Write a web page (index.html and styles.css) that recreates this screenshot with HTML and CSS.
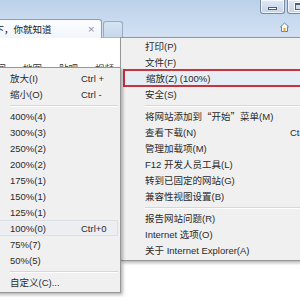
FILE: index.html
```html
<!DOCTYPE html>
<html lang="zh-CN">
<head>
  <meta charset="UTF-8">
  <title>Internet Explorer - 缩放</title>
  <link rel="stylesheet" href="styles.css">
</head>
<body>
  <div class="window">
    <div class="chrome">
      <div class="caption">
        <div class="win-btns">
          <span class="wbtn wbtn-min"><i></i></span>
          <span class="wbtn wbtn-max"><i></i></span>
        </div>
      </div>
      <div class="tabbar">
        <div class="tab">
          <span class="tab-title">百度一下，你就知道</span>
          <span class="tab-close">×</span>
        </div>
        <div class="tab-new"></div>
        <div class="toolbar-icons">
          <svg width="9" height="10" viewBox="0 0 9 10">
            <path d="M0.5 4.8 L4.5 1 L8.5 4.8 L7.5 4.8 L7.5 9.5 L1.5 9.5 L1.5 4.8 Z" fill="#fbfbfb" stroke="#6d7f96" stroke-width="1"/>
            <rect x="3.5" y="6" width="2" height="3.5" fill="#e3a23a"/>
          </svg>
        </div>
      </div>
    </div>

    <div class="page">
      <div class="page-nav">
        <span>新闻</span><span>地图</span><span>贴吧</span><span>视频</span>
      </div>
    </div>

    <!-- tools menu -->
    <div class="menu tools-menu">
      <div class="item"><span>打印(P)</span></div>
      <div class="item"><span>文件(F)</span></div>
      <div class="item item-marked"><span>缩放(Z) (100%)</span></div>
      <div class="item"><span>安全(S)</span></div>
      <div class="sep"></div>
      <div class="item"><span>将网站添加到<b class="cjk">“</b>开始<b class="cjk">”</b>菜单(M)</span></div>
      <div class="item"><span>查看下载(N)</span><span class="key">Ctrl+J</span></div>
      <div class="item"><span>管理加载项(M)</span></div>
      <div class="item"><span>F12 开发人员工具(L)</span></div>
      <div class="item"><span>转到已固定的网站(G)</span></div>
      <div class="item"><span>兼容性视图设置(B)</span></div>
      <div class="sep"></div>
      <div class="item"><span>报告网站问题(R)</span></div>
      <div class="item"><span>Internet 选项(O)</span></div>
      <div class="item"><span>关于 Internet Explorer(A)</span></div>
    </div>

    <!-- zoom submenu -->
    <div class="menu zoom-menu">
      <div class="item"><span>放大(I)</span><span class="key">Ctrl +</span></div>
      <div class="item"><span>缩小(O)</span><span class="key">Ctrl -</span></div>
      <div class="sep"></div>
      <div class="item"><span>400%(4)</span></div>
      <div class="item"><span>300%(3)</span></div>
      <div class="item"><span>250%(2)</span></div>
      <div class="item"><span>200%(2)</span></div>
      <div class="item"><span>175%(1)</span></div>
      <div class="item"><span>150%(1)</span></div>
      <div class="item"><span>125%(1)</span></div>
      <div class="item item-current"><span>100%(0)</span><span class="key">Ctrl+0</span></div>
      <div class="item"><span>75%(7)</span></div>
      <div class="item"><span>50%(5)</span></div>
      <div class="sep"></div>
      <div class="item"><span>自定义(C)...</span></div>
    </div>
  </div>
</body>
</html>
```

FILE: styles.css
```css
:root {
  --menu-bg: #f0f0f0;
  --menu-border: #979797;
  --text: #2a2a2a;
  --glass-top: #bcd1ea;
  --glass-bottom: #d3e2f3;
}

* {
  margin: 0;
  padding: 0;
  box-sizing: border-box;
}

body {
  width: 300px;
  height: 300px;
  overflow: hidden;
  background: #ffffff;
  font-family: "Liberation Sans", "Noto Sans CJK SC", sans-serif;
  font-size: 9.5px;
  color: var(--text);
}

.window {
  position: relative;
  width: 300px;
  height: 300px;
  overflow: hidden;
}

/* window chrome */
.chrome {
  background: linear-gradient(to bottom, var(--glass-top), var(--glass-bottom));
}

.caption {
  height: 17px;
  display: flex;
  justify-content: flex-end;
}

.win-btns {
  display: flex;
  gap: 2px;
  margin-right: -12px;
}

.wbtn {
  width: 25px;
  height: 14px;
  border: 1px solid #7a8ba1;
  border-top: none;
  border-radius: 0 0 3px 3px;
  background: linear-gradient(to bottom, #dfe9f5, #c3d4e8);
  box-shadow: inset 0 0 0 1px rgba(255, 255, 255, 0.7);
  display: flex;
  align-items: center;
  justify-content: center;
}

.wbtn-min i {
  width: 9px;
  height: 3px;
  margin-top: 3px;
  background: #ffffff;
  border: 1px solid #4f5f75;
}

.wbtn-max i {
  width: 9px;
  height: 7px;
  border: 1px solid #4f5f75;
  border-top-width: 2px;
  background: transparent;
  box-shadow: 0 0 0 1px #ffffff;
}

.tabbar {
  height: 21px;
  display: flex;
  align-items: flex-end;
  border-bottom: 1px solid #a9b7c8;
}

.tab {
  width: 144px;
  height: 19px;
  margin-left: -42px;
  margin-bottom: -1px;
  padding: 0 6px 0 7px;
  display: flex;
  align-items: center;
  background: linear-gradient(to bottom, #fbfcfe, #f2f6fb);
  border: 1px solid #8d9db2;
  border-bottom: none;
  border-radius: 3px 3px 0 0;
}

.tab-title {
  flex: 1;
  white-space: nowrap;
  overflow: hidden;
  color: #202020;
}

.tab-close {
  color: #8a8a8a;
  font-family: "DejaVu Sans", sans-serif;
  font-size: 9px;
}

.tab-new {
  width: 20px;
  height: 16px;
  margin-left: 1px;
  background: linear-gradient(to bottom, #d6e3f2, #c8d9ed);
  border: 1px solid #9aaac0;
  border-bottom: none;
  border-radius: 3px 3px 0 0;
}

.toolbar-icons {
  margin-left: auto;
  margin-right: 11px;
  margin-bottom: 5px;
  display: flex;
}

/* page behind the menus */
.page {
  height: 262px;
  background: #ffffff;
}

.page-nav {
  height: 29px;
  overflow: hidden;
  display: flex;
  gap: 17px;
  margin-left: -13px;
  padding-top: 23px;
  color: #333333;
}

/* menus */
.menu {
  position: absolute;
  background: var(--menu-bg);
  border: 1px solid var(--menu-border);
  box-shadow: 2px 2px 3px rgba(0, 0, 0, 0.28);
}

.item {
  height: 16px;
  display: flex;
  align-items: center;
  white-space: nowrap;
}

.cjk {
  font-weight: normal;
  font-family: "Noto Sans CJK SC", sans-serif;
}

.sep {
  height: 6px;
  display: flex;
  align-items: center;
}

.sep::after {
  content: "";
  flex: 1;
  height: 1px;
  background: #d7d7d7;
  box-shadow: 0 1px 0 #ffffff;
}

.tools-menu {
  left: 120px;
  top: 37px;
  width: 230px;
  padding: 0 2px 2px;
  z-index: 1;
}

.tools-menu .item {
  padding-left: 22px;
}

.tools-menu .item span:first-child {
  width: 145px;
}

.tools-menu .sep {
  margin-left: 22px;
}

.item-marked {
  margin: 0 -1px 0 1px;
  background: #e7edf4;
  outline: 2px solid #c8333d;
  outline-offset: -1px;
}

.zoom-menu {
  left: -20px;
  top: 67px;
  width: 141px;
  padding: 2px;
  z-index: 2;
}

.zoom-menu .item {
  padding-left: 27px;
}

.zoom-menu .item span:first-child {
  width: 71px;
}

.zoom-menu .sep {
  margin-left: 27px;
}

.item-current {
  background: #eceef1;
  box-shadow: inset 0 0 0 1px #dcdfe3;
}
```
